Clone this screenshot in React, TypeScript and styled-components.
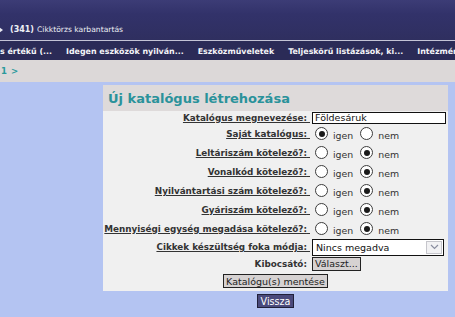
import React from "react";
import styled, { createGlobalStyle } from "styled-components";

const Global = createGlobalStyle`
  html, body { margin: 0; padding: 0; }
  body {
    background: #b4c4f2;
    font-family: "DejaVu Sans", Verdana, sans-serif;
    overflow: hidden;
  }
`;

const Page = styled.div`
  width: 455px;
  height: 317px;
  display: flex;
  flex-direction: column;
  overflow: hidden;
`;

const TopBar = styled.div`
  height: 41px;
  background: linear-gradient(#3c3c76 0px, #32326a 14px, #2f2f5f 41px);
  display: flex;
  align-items: flex-end;
  box-sizing: border-box;
  padding-bottom: 6px;
  border-bottom: 1px solid #c4c4d6;
`;

const Crumb = styled.div`
  display: flex;
  align-items: center;
  gap: 3px;
  color: #eef0f6;
  font-size: 7.6px;
  white-space: nowrap;
`;

const CrumbArrow = styled.span`
  width: 0;
  height: 0;
  border-top: 3px solid transparent;
  border-bottom: 3px solid transparent;
  border-left: 4px solid #e8e8f0;
  margin-left: -1px;
  margin-right: 4px;
`;

const CrumbCode = styled.b`
  font-weight: bold;
  font-size: 8px;
`;

const MenuBar = styled.div`
  height: 19px;
  background: #2b2b57;
  display: flex;
  align-items: center;
  gap: 14px;
  white-space: nowrap;
  overflow: hidden;
  padding-top: 1px;
  box-sizing: border-box;
`;

const MenuItem = styled.span`
  color: #f4f4f8;
  font-weight: bold;
  font-size: 7.9px;
  flex: none;
`;

const Pager = styled.div`
  height: 22px;
  background: #dcd8d8;
  display: flex;
  align-items: center;
  color: #2a9a9c;
  font-weight: bold;
  font-size: 8.5px;
  gap: 4px;
  padding-left: 1px;
`;

const Main = styled.div`
  flex: 1;
  background: #b4c4f2;
  padding: 3px 7px 0 103px;
  display: flex;
  flex-direction: column;
  align-items: center;
`;

const Panel = styled.div`
  align-self: stretch;
  background: #f0f0f0;
  display: flex;
  flex-direction: column;
`;

const PanelHead = styled.div`
  height: 26px;
  background: #dedada;
  color: #2a929a;
  font-weight: bold;
  font-size: 13px;
  display: flex;
  align-items: center;
  padding-left: 5px;
  padding-top: 1px;
  box-sizing: border-box;
`;

const Form = styled.div`
  display: grid;
  grid-template-columns: 207px 1fr;
  column-gap: 2px;
`;

const Label = styled.div<{ $h: number }>`
  height: ${(p) => p.$h}px;
  display: flex;
  align-items: center;
  justify-content: flex-end;
  font-weight: bold;
  font-size: 8.8px;
  color: #333;
  text-decoration: underline;
  white-space: nowrap;
`;

const PlainLabel = styled(Label)`
  text-decoration: none;
`;

const Cell = styled.div<{ $h: number }>`
  height: ${(p) => p.$h}px;
  display: flex;
  align-items: center;
`;

const TextInput = styled.div`
  width: 134px;
  height: 12px;
  box-sizing: border-box;
  border: 1px solid #111;
  background: #fff;
  font-size: 9.5px;
  line-height: 10px;
  padding-left: 2px;
  color: #111;
`;

const RadioGroup = styled.div`
  display: flex;
  align-items: center;
  padding-left: 3px;
`;

const RadioCircle = styled.span<{ $on?: boolean }>`
  width: 13px;
  height: 13px;
  box-sizing: border-box;
  border-radius: 50%;
  border: 1px solid #3c3c3c;
  background: #fff;
  display: flex;
  align-items: center;
  justify-content: center;
  flex: none;
  &::after {
    content: "";
    width: 6px;
    height: 6px;
    border-radius: 50%;
    background: ${(p) => (p.$on ? "#1a1a1a" : "transparent")};
  }
`;

const RadioText = styled.span`
  font-size: 9.4px;
  color: #333;
  margin: 4px 7px 0 5px;
`;

const Select = styled.div`
  width: 132px;
  height: 17px;
  box-sizing: border-box;
  border: 1px solid #111;
  background: #fff;
  display: flex;
  align-items: center;
  justify-content: space-between;
  font-size: 9.5px;
  color: #111;
  padding: 0 1px 0 3px;
`;

const SelectArrow = styled.span`
  width: 16px;
  height: 13px;
  box-sizing: border-box;
  border: 1px solid #c6c6cc;
  background: #f2f2f4;
  display: flex;
  align-items: center;
  justify-content: center;
`;

const GreyButton = styled.div`
  height: 14px;
  box-sizing: border-box;
  border: 1px solid #222;
  background: #d6d2d2;
  color: #222;
  font-size: 9.5px;
  display: flex;
  align-items: center;
  padding: 0 2px;
  white-space: nowrap;
`;

const SaveRow = styled.div`
  grid-column: 1 / -1;
  height: 20px;
  display: flex;
  align-items: center;
  justify-content: center;
`;

const BackButton = styled.div`
  margin-top: 3px;
  height: 14px;
  box-sizing: border-box;
  border: 1px solid #20203a;
  background: #4a4a7c;
  color: #fff;
  font-size: 9.6px;
  display: flex;
  align-items: center;
  padding: 0 3px;
`;

type RadioRowProps = { label: string; yes: boolean };

const RadioRow = ({ label, yes }: RadioRowProps) => (
  <>
    <Label $h={19}>{label}&nbsp;</Label>
    <Cell $h={19}>
      <RadioGroup>
        <RadioCircle $on={yes} />
        <RadioText>igen</RadioText>
        <RadioCircle $on={!yes} />
        <RadioText>nem</RadioText>
      </RadioGroup>
    </Cell>
  </>
);

const radios: RadioRowProps[] = [
  { label: "Saját katalógus:", yes: true },
  { label: "Leltáriszám kötelező?:", yes: false },
  { label: "Vonalkód kötelező?:", yes: false },
  { label: "Nyilvántartási szám kötelező?:", yes: false },
  { label: "Gyáriszám kötelező?:", yes: false },
  { label: "Mennyiségi egység megadása kötelező?:", yes: false },
];

export default function App() {
  return (
    <Page>
      <Global />
      <TopBar>
        <Crumb>
          <CrumbArrow />
          <CrumbCode>(341)</CrumbCode>
          <span>Cikktörzs karbantartás</span>
        </Crumb>
      </TopBar>
      <MenuBar>
        <MenuItem>s értékű (...</MenuItem>
        <MenuItem>Idegen eszközök nyilván...</MenuItem>
        <MenuItem>Eszközműveletek</MenuItem>
        <MenuItem>Teljeskörű listázások, ki...</MenuItem>
        <MenuItem>Intézmény</MenuItem>
      </MenuBar>
      <Pager>
        <span>1</span>
        <span>&gt;</span>
      </Pager>
      <Main>
        <Panel>
          <PanelHead>Új katalógus létrehozása</PanelHead>
          <Form>
            <Label $h={13}>Katalógus megnevezése:&nbsp;</Label>
            <Cell $h={13}>
              <TextInput>Földesáruk</TextInput>
            </Cell>
            {radios.map((r) => (
              <RadioRow key={r.label} {...r} />
            ))}
            <Label $h={18}>Cikkek készültség foka módja:&nbsp;</Label>
            <Cell $h={18}>
              <Select>
                <span>Nincs megadva</span>
                <SelectArrow>
                  <svg width="9" height="6" viewBox="0 0 9 6">
                    <polyline
                      points="1,1 4.5,4.5 8,1"
                      fill="none"
                      stroke="#8a8ea0"
                      strokeWidth="1.2"
                    />
                  </svg>
                </SelectArrow>
              </Select>
            </Cell>
            <PlainLabel $h={15}>Kibocsátó:&nbsp;</PlainLabel>
            <Cell $h={15}>
              <GreyButton>Választ...</GreyButton>
            </Cell>
            <SaveRow>
              <GreyButton>Katalógu(s) mentése</GreyButton>
            </SaveRow>
          </Form>
        </Panel>
        <BackButton>Vissza</BackButton>
      </Main>
    </Page>
  );
}
